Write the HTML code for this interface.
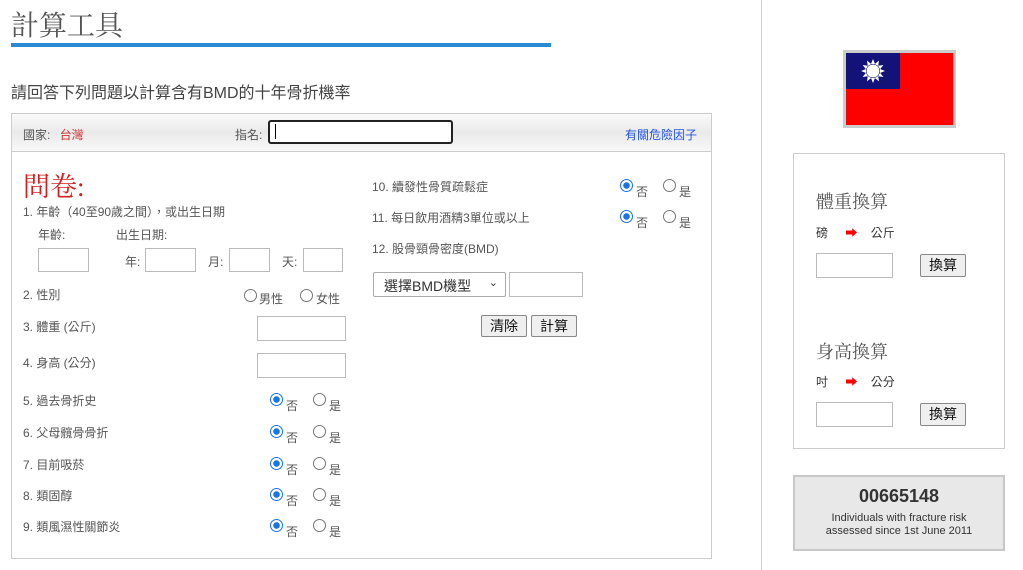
<!DOCTYPE html>
<html><head><meta charset="utf-8"><style>
*{box-sizing:border-box;margin:0;padding:0}
body{width:1023px;height:570px;background:#fff;font-family:"Liberation Sans","Noto Sans CJK TC",sans-serif;color:#555;position:relative;overflow:hidden;font-size:13px}
.a{position:absolute;white-space:nowrap}
.inp{position:absolute;border:1px solid #bbb;background:#fff}
.rad{position:absolute;width:13px;height:13px;border:1px solid #777;border-radius:50%;background:#fff}
.rad.on{border-color:#1a73e8;background:radial-gradient(circle,#1a73e8 0 3px,#fff 3.5px)}
.btn{position:absolute;border:1px solid #888;background:#efefef;border-radius:2px;font-size:14px;color:#111;text-align:center}
.serif{font-family:"Liberation Serif","Noto Serif CJK SC",serif}
</style></head><body>
<div class="a serif" style="left:11px;top:4px;font-size:28px;color:#555">計算工具</div>
<div class="a" style="left:11px;top:43px;width:540px;height:4px;background:#2a8ad4"></div>
<div class="a" style="left:11px;top:79px;font-size:16px;color:#444">請回答下列問題以計算含有BMD的十年骨折機率</div>
<div class="a" style="left:761px;top:0;width:1px;height:570px;background:#ccc"></div>

<div class="a" style="left:11px;top:113px;width:701px;height:446px;border:1px solid #ccc"></div>
<div class="a" style="left:12px;top:114px;width:699px;height:38px;background:linear-gradient(#fafafa,#eaeaea,#f8f8f8);border-bottom:1px solid #ccc"></div>
<div class="a" style="left:23px;top:126px;font-size:12px">國家: <span style="color:#c33;margin-left:6px">台灣</span></div>
<div class="a" style="left:235px;top:126px;font-size:12px">指名:</div>
<div class="a" style="left:268px;top:120px;width:185px;height:24px;border:2px solid #222;border-radius:3px;background:#fff"></div>
<div class="a" style="left:275px;top:124px;width:1px;height:15px;background:#000"></div>
<div class="a" style="left:625px;top:126px;font-size:12px;color:#2255dd">有關危險因子</div>

<div class="a serif" style="left:23px;top:165px;font-size:27px;color:#d02020">問卷:</div>
<div class="a" style="left:23px;top:203px;font-size:12px">1. 年齡（40至90歲之間），或出生日期</div>
<div class="a" style="left:38px;top:226px;font-size:12px">年齡:</div>
<div class="a" style="left:116px;top:226px;font-size:12px">出生日期:</div>
<div class="inp" style="left:38px;top:248px;width:51px;height:24px"></div>
<div class="a" style="left:125px;top:253px;font-size:12px">年:</div>
<div class="inp" style="left:145px;top:248px;width:51px;height:24px"></div>
<div class="a" style="left:208px;top:253px;font-size:12px">月:</div>
<div class="inp" style="left:229px;top:248px;width:41px;height:24px"></div>
<div class="a" style="left:282px;top:253px;font-size:12px">天:</div>
<div class="inp" style="left:303px;top:248px;width:40px;height:24px"></div>

<div class="a" style="left:23px;top:286px;font-size:12px">2. 性別</div>
<div class="rad" style="left:244px;top:289px"></div><div class="a" style="left:259px;top:290px;font-size:12px">男性</div>
<div class="rad" style="left:300px;top:289px"></div><div class="a" style="left:316px;top:290px;font-size:12px">女性</div>
<div class="a" style="left:23px;top:318px;font-size:12px">3. 體重 (公斤)</div>
<div class="inp" style="left:257px;top:316px;width:89px;height:25px"></div>
<div class="a" style="left:23px;top:354px;font-size:12px">4. 身高 (公分)</div>
<div class="inp" style="left:257px;top:353px;width:89px;height:25px"></div>

<div class="a" style="left:23px;top:392px;font-size:12px">5. 過去骨折史</div>
<div class="a" style="left:23px;top:424px;font-size:12px">6. 父母髖骨骨折</div>
<div class="a" style="left:23px;top:456px;font-size:12px">7. 目前吸菸</div>
<div class="a" style="left:23px;top:487px;font-size:12px">8. 類固醇</div>
<div class="a" style="left:23px;top:518px;font-size:12px">9. 類風濕性關節炎</div>
<div class="rad on" style="left:270px;top:393px"></div><div class="a" style="left:286px;top:397px;font-size:12px">否</div><div class="rad" style="left:313px;top:393px"></div><div class="a" style="left:329px;top:397px;font-size:12px">是</div>
<div class="rad on" style="left:270px;top:425px"></div><div class="a" style="left:286px;top:429px;font-size:12px">否</div><div class="rad" style="left:313px;top:425px"></div><div class="a" style="left:329px;top:429px;font-size:12px">是</div>
<div class="rad on" style="left:270px;top:457px"></div><div class="a" style="left:286px;top:461px;font-size:12px">否</div><div class="rad" style="left:313px;top:457px"></div><div class="a" style="left:329px;top:461px;font-size:12px">是</div>
<div class="rad on" style="left:270px;top:488px"></div><div class="a" style="left:286px;top:492px;font-size:12px">否</div><div class="rad" style="left:313px;top:488px"></div><div class="a" style="left:329px;top:492px;font-size:12px">是</div>
<div class="rad on" style="left:270px;top:519px"></div><div class="a" style="left:286px;top:523px;font-size:12px">否</div><div class="rad" style="left:313px;top:519px"></div><div class="a" style="left:329px;top:523px;font-size:12px">是</div>

<div class="a" style="left:372px;top:178px;font-size:12px">10. 續發性骨質疏鬆症</div>
<div class="a" style="left:372px;top:209px;font-size:12px">11. 每日飲用酒精3單位或以上</div>
<div class="a" style="left:372px;top:240px;font-size:12px">12. 股骨頸骨密度(BMD)</div>
<div class="rad on" style="left:620px;top:179px"></div><div class="a" style="left:636px;top:183px;font-size:12px">否</div><div class="rad" style="left:663px;top:179px"></div><div class="a" style="left:679px;top:183px;font-size:12px">是</div>
<div class="rad on" style="left:620px;top:210px"></div><div class="a" style="left:636px;top:214px;font-size:12px">否</div><div class="rad" style="left:663px;top:210px"></div><div class="a" style="left:679px;top:214px;font-size:12px">是</div>
<div class="a" style="left:373px;top:272px;width:133px;height:25px;border:1px solid #aaa;border-radius:2px;background:#fff;font-size:14px;color:#333;padding:3px 0 0 10px">選擇BMD機型 <span style="position:absolute;right:7px;top:3px;font-size:11px">⌄</span></div>
<div class="inp" style="left:509px;top:272px;width:74px;height:25px"></div>
<div class="btn" style="left:481px;top:315px;width:46px;height:22px;line-height:20px">清除</div>
<div class="btn" style="left:531px;top:315px;width:46px;height:22px;line-height:20px">計算</div>

<div class="a" style="left:843px;top:50px;width:113px;height:78px;background:#ccc;padding:3px">
<div style="position:relative;width:107px;height:72px;background:#f00">
<div style="position:absolute;left:0;top:0;width:54px;height:36px;background:#121278"></div>
<svg style="position:absolute;left:15px;top:6px" width="24" height="24" viewBox="-12 -12 24 24">
<g fill="#fff">
<polygon points="0,-12 2,-7 -2,-7" transform="rotate(0)"/><polygon points="0,-12 2,-7 -2,-7" transform="rotate(30)"/><polygon points="0,-12 2,-7 -2,-7" transform="rotate(60)"/><polygon points="0,-12 2,-7 -2,-7" transform="rotate(90)"/><polygon points="0,-12 2,-7 -2,-7" transform="rotate(120)"/><polygon points="0,-12 2,-7 -2,-7" transform="rotate(150)"/><polygon points="0,-12 2,-7 -2,-7" transform="rotate(180)"/><polygon points="0,-12 2,-7 -2,-7" transform="rotate(210)"/><polygon points="0,-12 2,-7 -2,-7" transform="rotate(240)"/><polygon points="0,-12 2,-7 -2,-7" transform="rotate(270)"/><polygon points="0,-12 2,-7 -2,-7" transform="rotate(300)"/><polygon points="0,-12 2,-7 -2,-7" transform="rotate(330)"/>
<circle r="6.5"/></g></svg>
</div></div>

<div class="a" style="left:793px;top:153px;width:212px;height:296px;border:1px solid #ccc"></div>
<div class="a serif" style="left:816px;top:188px;font-size:18px;color:#555">體重換算</div>
<div class="a" style="left:816px;top:224px;font-size:12px;color:#333">磅 <span style="color:red;margin:0 10px 0 14px">➡</span> 公斤</div>
<div class="inp" style="left:816px;top:253px;width:77px;height:25px"></div>
<div class="btn" style="left:920px;top:254px;width:46px;height:23px;line-height:21px">換算</div>
<div class="a serif" style="left:816px;top:338px;font-size:18px;color:#555">身高換算</div>
<div class="a" style="left:816px;top:373px;font-size:12px;color:#333">吋 <span style="color:red;margin:0 10px 0 14px">➡</span> 公分</div>
<div class="inp" style="left:816px;top:402px;width:77px;height:25px"></div>
<div class="btn" style="left:920px;top:403px;width:46px;height:23px;line-height:21px">換算</div>

<div class="a" style="left:793px;top:475px;width:212px;height:76px;border:2px solid #c8c8c8;background:#e8e8e8;text-align:center;color:#333">
<div style="font-size:18px;font-weight:bold;margin-top:9px">00665148</div>
<div style="font-size:11px;margin-top:5px;line-height:13px">Individuals with fracture risk<br>assessed since 1st June 2011</div></div>
</body></html>
